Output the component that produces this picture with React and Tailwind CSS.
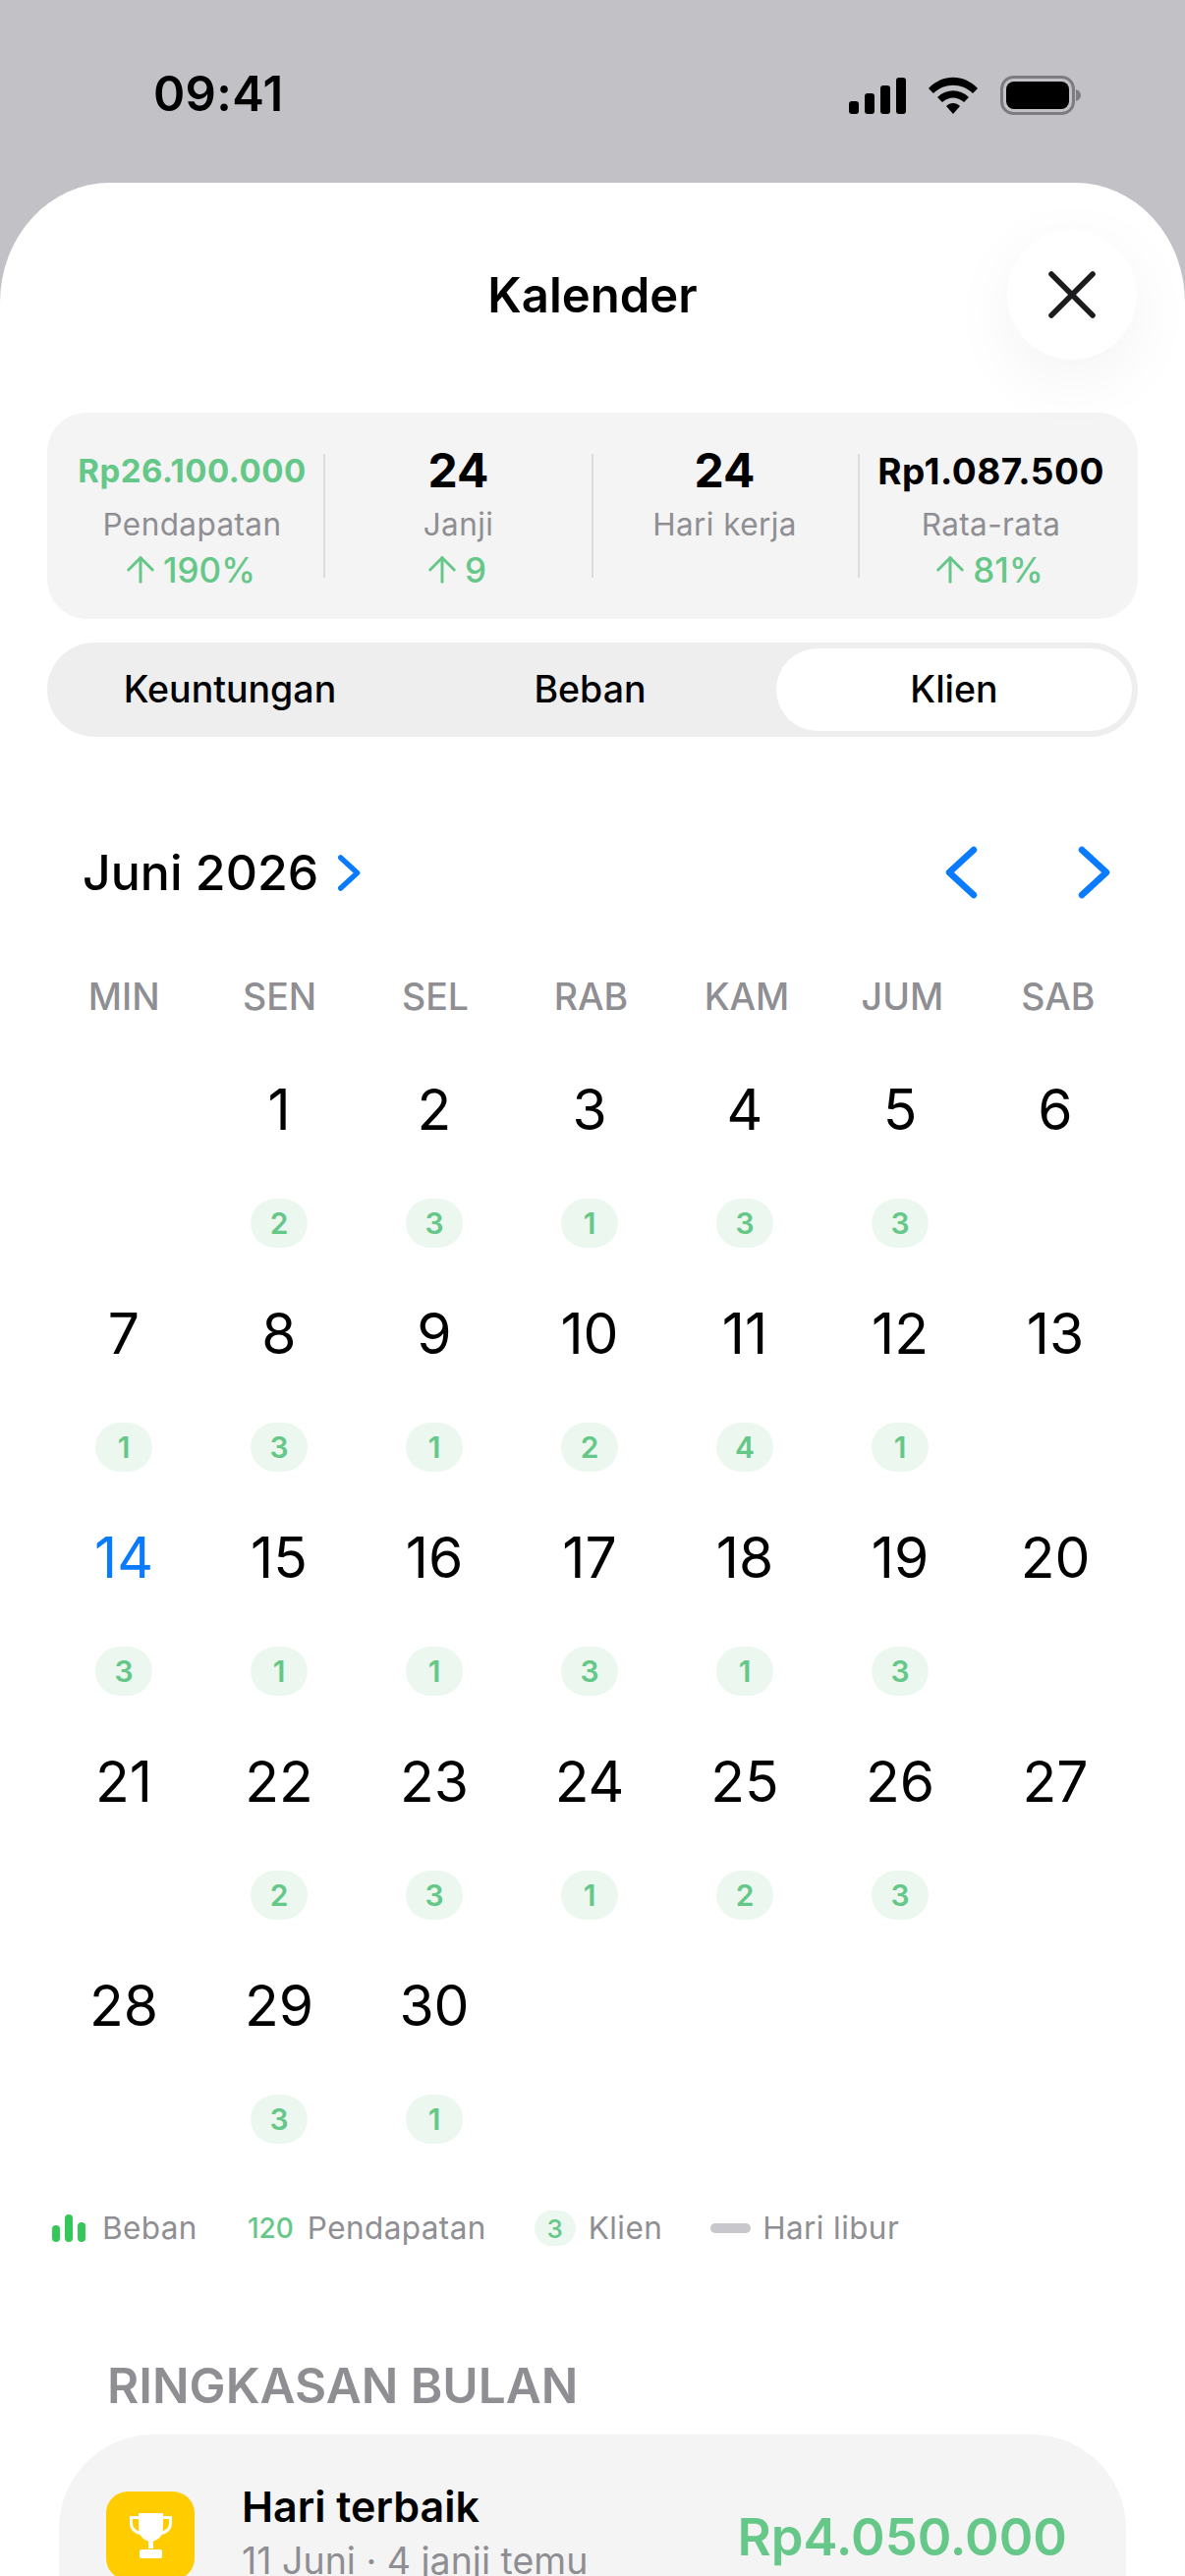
import { X, ArrowUp } from "lucide-react";

const weekdays = ["MIN", "SEN", "SEL", "RAB", "KAM", "JUM", "SAB"];

// null = empty cell, [day, clients]
const weeks = [
  [null, [1, 2], [2, 3], [3, 1], [4, 3], [5, 3], [6]],
  [[7, 1], [8, 3], [9, 1], [10, 2], [11, 4], [12, 1], [13]],
  [[14, 3], [15, 1], [16, 1], [17, 3], [18, 1], [19, 3], [20]],
  [[21], [22, 2], [23, 3], [24, 1], [25, 2], [26, 3], [27]],
  [[28], [29, 3], [30, 1], null, null, null, null],
];

function Stat({ value, label, delta, valueClass }) {
  return (
    <div className="flex flex-col items-center">
      <div className={`flex h-[50px] items-center whitespace-nowrap font-bold ${valueClass}`}>{value}</div>
      <div className="mt-[8px] flex h-[42px] items-center text-[31.5px] tracking-[0.4px] text-[#8e8e93]">{label}</div>
      {delta && (
        <div className="mt-[3px] flex h-[44px] items-center gap-[11px] text-[35px] font-medium text-[#65c788]">
          <ArrowUp className="-mx-[9px] h-[42px] w-[42px]" strokeWidth={1.7} />
          {delta}
        </div>
      )}
    </div>
  );
}

function Day({ cell }) {
  if (!cell) return <div className="h-[228px]" />;
  const [day, clients] = cell;
  return (
    <div className="flex h-[228px] flex-col items-center">
      <div className={`mt-[26px] flex h-[76px] items-center text-[57px] ${day === 14 ? "text-[#0a7aff]" : "text-black"}`}>
        {day}
      </div>
      {clients && (
        <div className="mt-[52px] flex h-[50px] w-[58px] items-center justify-center rounded-full bg-[#ecf7ef] text-[30px] font-semibold text-[#65c788]">
          {clients}
        </div>
      )}
    </div>
  );
}

function Chevron({ left, className, weight }) {
  return (
    <svg viewBox="0 0 34 54" className={className} fill="none" stroke="currentColor" strokeWidth={weight} strokeLinecap="round" strokeLinejoin="round">
      <polyline points={left ? "30,4 5,27 30,50" : "4,4 29,27 4,50"} />
    </svg>
  );
}

export default function App() {
  return (
    <div className="h-[2622px] w-[1206px] overflow-hidden bg-[#c2c1c6] font-['Inter',sans-serif]">
      {/* Status bar */}
      <div className="flex h-[186px] items-start justify-between pl-[156px] pr-[106px] pt-[66px]">
        <span className="text-[49px] leading-[60px] font-semibold tracking-[0.3px] text-black">09:41</span>
        <div className="mt-[11px] flex items-center gap-[22px]">
          <svg width="58" height="37" viewBox="0 0 58 37">
            <rect x="0" y="24" width="10" height="13" rx="3" />
            <rect x="16" y="16" width="10" height="21" rx="3" />
            <rect x="32" y="8" width="10" height="29" rx="3" />
            <rect x="48" y="0" width="10" height="37" rx="3" />
          </svg>
          <svg width="52" height="38" viewBox="0 0 52 38">
            <path d="M1 12 C15 -3 37 -3 51 12 L46 17 C35 6 17 6 6 17 Z" />
            <path d="M10 21 C19 12 33 12 42 21 L37 26 C30 20 22 20 15 26 Z" />
            <path d="M19 30 C23 26 29 26 33 30 L26 38 Z" />
          </svg>
          <svg width="82" height="40" viewBox="0 0 82 40">
            <rect x="1.500" y="1.500" width="73" height="37" rx="12" fill="none" stroke="#7d7d80" strokeWidth="3" />
            <rect x="6" y="6" width="64" height="28" rx="8" />
            <path d="M77 14 C80 15 82 17 82 20 C82 23 80 25 77 26 Z" fill="#7d7d80" />
          </svg>
        </div>
      </div>

      {/* Sheet */}
      <div className="h-[2436px] rounded-tl-[112px_122px] rounded-tr-[112px_122px] bg-white">
        <div className="relative flex h-[234px] items-center justify-center pb-[4px]">
          <h1 className="text-[49px] font-semibold text-black">Kalender</h1>
          <div className="absolute left-[1025px] top-[48px] flex h-[132px] w-[132px] items-center justify-center rounded-full bg-white shadow-[0_20px_70px_rgba(0,0,0,0.05)]">
            <X className="h-[84px] w-[84px] text-[#1c1c1e]" strokeWidth={1.6} />
          </div>
        </div>

        {/* Stats */}
        <div className="mx-[48px] grid h-[210px] grid-cols-[271px_271px_271px_271px] items-start rounded-[40px] bg-[#f4f4f4] pl-[12px] pt-[35px]">
          <div className="relative">
            <Stat value="Rp26.100.000" label="Pendapatan" delta="190%" valueClass="text-[33px] tracking-[0.5px] text-[#65c788]" />
            <div className="absolute right-0 top-[7px] h-[126px] w-[2px] bg-[#dcdcdc]" />
          </div>
          <div className="relative">
            <Stat value="24" label="Janji" delta="9" valueClass="-translate-y-[1px] text-[48px] text-black" />
            <div className="absolute -right-[2px] top-[7px] h-[126px] w-[2px] bg-[#dcdcdc]" />
          </div>
          <div className="relative">
            <Stat value="24" label="Hari kerja" valueClass="-translate-y-[1px] text-[48px] text-black" />
            <div className="absolute -right-[2px] top-[7px] h-[126px] w-[2px] bg-[#dcdcdc]" />
          </div>
          <Stat value="Rp1.087.500" label="Rata-rata" delta="81%" valueClass="text-[37px] tracking-[0.5px] text-black" />
        </div>

        {/* Segmented */}
        <div className="mx-[48px] mt-[24px] flex h-[96px] items-center rounded-full bg-[#eeeeee] p-[6px] text-[37.5px] font-medium text-black">
          <div className="flex h-full w-[360px] items-center justify-center">Keuntungan</div>
          <div className="flex h-full w-[373px] items-center justify-center">Beban</div>
          <div className="ml-auto flex h-full w-[362px] items-center justify-center rounded-full bg-white">Klien</div>
        </div>

        {/* Month header */}
        <div className="mt-[96px] flex h-[84px] items-center justify-between pl-[84px] pr-[75px]">
          <div className="flex items-center gap-[20px]">
            <span className="text-[50px] font-medium text-black">Juni 2026</span>
            <Chevron weight={8} className="h-[37px] w-[23px] text-[#0a7aff]" />
          </div>
          <div className="flex items-center gap-[102px] text-[#0a7aff]">
            <Chevron left weight={6.5} className="h-[54px] w-[34px]" />
            <Chevron weight={6.5} className="h-[54px] w-[34px]" />
          </div>
        </div>

        {/* Calendar */}
        <div className="ml-[47px] mr-[50px] mt-[63px] grid grid-cols-7">
          {weekdays.map((d) => (
            <div key={d} className="flex h-[44px] items-center justify-center text-[37.5px] font-medium text-[#8e8e93]">
              {d}
            </div>
          ))}
        </div>
        <div className="ml-[47px] mr-[53px] mt-[29px] grid grid-cols-7">
          {weeks.flat().map((cell, i) => (
            <Day key={i} cell={cell} />
          ))}
        </div>

        {/* Legend */}
        <div className="mt-[37px] flex h-[50px] items-center pl-[53px] text-[31.5px] tracking-[0.4px] text-[#8e8e93]">
          <svg width="34" height="28" viewBox="0 0 34 28" className="mr-[17px] fill-[#34c759]">
            <rect x="0" y="11" width="8" height="17" rx="4" />
            <rect x="13" y="0" width="8" height="28" rx="4" />
            <rect x="26" y="8" width="8" height="20" rx="4" />
          </svg>
          <span>Beban</span>
          <span className="ml-[51px] mr-[14px] text-[28px] font-medium tracking-normal text-[#65c788]">120</span>
          <span>Pendapatan</span>
          <span className="ml-[49px] mr-[13px] flex h-[36px] w-[42px] items-center justify-center rounded-full bg-[#ecf7ef] text-[26px] font-medium text-[#65c788]">3</span>
          <span>Klien</span>
          <span className="ml-[49px] mr-[12px] h-[10px] w-[41px] rounded-full bg-[#c7c7cc]" />
          <span>Hari libur</span>
        </div>

        {/* Summary */}
        <h2 className="ml-[109px] mt-[107px] text-[49.5px] leading-[56px] font-semibold text-[#8e8e93]">RINGKASAN BULAN</h2>
        <div className="mx-[60px] mt-[22px] flex h-[300px] items-start justify-between rounded-[96px] bg-[#f4f4f4] pl-[48px] pr-[60px] pt-[58px]">
          <div className="flex items-start">
            <div className="flex h-[90px] w-[90px] items-center justify-center rounded-[22px] bg-[#ffcc00]">
              <svg width="43" height="46" viewBox="0 0 43 46" fill="white">
                <path d="M9 0h25v3h9v7c0 7-5 11-10.500 12C30 26 27 28 24 28.500V36h-5v-7.500C16 28 13 26 10.500 22 5 21 0 17 0 10V3h9V0zM3 6v4c0 4 2.500 7 6.500 8.500C9 15 9 10 9 6H3zm31 0c0 4 0 9-.500 12.500C37.500 17 40 14 40 10V6h-6z" />
                <rect x="10" y="37" width="23" height="9" rx="2" />
              </svg>
            </div>
            <div className="ml-[48px] -mt-[13px]">
              <div className="text-[43px] leading-[56px] font-semibold text-black">Hari terbaik</div>
              <div className="mt-[6px] text-[37.5px] leading-[44px] text-[#8e8e93]">11 Juni · 4 janji temu</div>
            </div>
          </div>
          <div className="mt-[10px] text-[52.5px] leading-[72px] font-semibold text-[#65c788]">Rp4.050.000</div>
        </div>
      </div>
    </div>
  );
}
